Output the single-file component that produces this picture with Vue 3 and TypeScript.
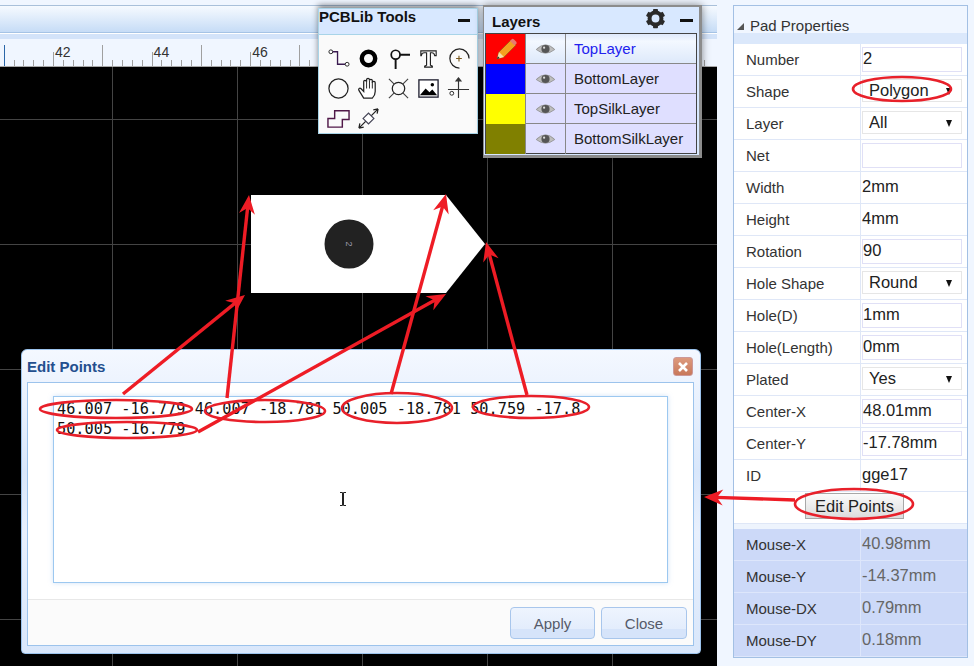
<script setup lang="ts">
interface Row { label: string; kind: 'input' | 'select' | 'text' | 'button'; value: string }
const rows: Row[] = [
  { label: 'Number', kind: 'input', value: '2' },
  { label: 'Shape', kind: 'select', value: 'Polygon' },
  { label: 'Layer', kind: 'select', value: 'All' },
  { label: 'Net', kind: 'input', value: '' },
  { label: 'Width', kind: 'text', value: '2mm' },
  { label: 'Height', kind: 'text', value: '4mm' },
  { label: 'Rotation', kind: 'input', value: '90' },
  { label: 'Hole Shape', kind: 'select', value: 'Round' },
  { label: 'Hole(D)', kind: 'input', value: '1mm' },
  { label: 'Hole(Length)', kind: 'input', value: '0mm' },
  { label: 'Plated', kind: 'select', value: 'Yes' },
  { label: 'Center-X', kind: 'input', value: '48.01mm' },
  { label: 'Center-Y', kind: 'input', value: '-17.78mm' },
  { label: 'ID', kind: 'text', value: 'gge17' },
]
const mouse = [
  { label: 'Mouse-X', value: '40.98mm' },
  { label: 'Mouse-Y', value: '-14.37mm' },
  { label: 'Mouse-DX', value: '0.79mm' },
  { label: 'Mouse-DY', value: '0.18mm' },
]
const layers = [
  { name: 'TopLayer', color: '#ff0000', active: true },
  { name: 'BottomLayer', color: '#0000ff', active: false },
  { name: 'TopSilkLayer', color: '#ffff00', active: false },
  { name: 'BottomSilkLayer', color: '#808000', active: false },
]
const points = '46.007 -16.779 46.007 -18.781 50.005 -18.781 50.759 -17.8\n50.005 -16.779'
const gearTeeth = [0, 60, 120]
const ticks = Array.from({ length: 72 }, (_, i) => {
  const x = 3.7 + i * 9.86
  const kind = i % 10 === 0 ? 45 : i % 5 === 0 ? 52 : 60
  return { x: Math.round(x) + 0.5, y: kind, blue: i === 0 }
})
const labels = ['42', '44', '46', '48', '50', '52', '54'].map((t, i) => ({ t, x: 55 + i * 98.6 }))

const ellipses = [
  [116, 409, 76, 9], [265, 411, 60, 11], [397, 408, 55, 15], [531, 407, 58, 11],
  [127, 430, 70, 8], [902, 89, 49, 12], [854, 504, 59, 15],
]
function arrow(x1: number, y1: number, x2: number, y2: number) {
  const l = Math.hypot(x2 - x1, y2 - y1)
  const ux = (x2 - x1) / l
  const uy = (y2 - y1) / l
  const px = -uy
  const py = ux
  const pt = (a: number, b: number) => `${(x2 - ux * a + px * b).toFixed(1)},${(y2 - uy * a + py * b).toFixed(1)}`
  return {
    x1, y1,
    x2: x2 - ux * 12,
    y2: y2 - uy * 12,
    head: [pt(0, 0), pt(19, 8), pt(13, 0), pt(19, -8)].join(' '),
  }
}
const arrows = [
  arrow(123, 394, 245, 295), arrow(227, 398, 249, 195), arrow(198, 432, 446, 294),
  arrow(391, 394, 446, 194), arrow(527, 395, 486, 242), arrow(795, 500, 704, 497),
]
</script>

<template>
  <div class="root">
    <div class="work">
      <div class="strip"></div>
      <div class="bar"></div>
      <div class="bar-low"></div>
      <svg class="ruler" width="717" height="28" viewBox="0 39 717 28">
        <line v-for="t in ticks" :key="t.x" :x1="t.x" :x2="t.x" :y1="t.y" y2="67" :stroke="t.blue ? '#2a66a8' : '#a0a0a0'" />
        <text v-for="l in labels" :key="l.t" :x="l.x" y="57" class="ruler-text">{{ l.t }}</text>
      </svg>
      <div class="canvas">
        <svg class="pad" width="717" height="599" viewBox="0 67 717 599">
          <polygon points="251,195 446,195 485,244 446,293 251,293" fill="#fff" />
          <circle cx="349" cy="244" r="24.5" fill="#222" />
          <text x="349" y="244" class="pad-text" transform="rotate(90 349 244)">2</text>
        </svg>
      </div>
    </div>

    <aside class="panel">
      <div class="panel-head"><span class="caret"></span>Pad Properties</div>
      <div v-for="r in rows" :key="r.label" class="row">
        <div class="label">{{ r.label }}</div>
        <div class="cell">
          <div v-if="r.kind === 'input'" class="input">{{ r.value }}</div>
          <div v-else-if="r.kind === 'select'" class="select"><span>{{ r.value }}</span><i class="down"></i></div>
          <div v-else class="plain">{{ r.value }}</div>
        </div>
      </div>
      <div class="btn-row"><button class="edit-btn">Edit Points</button></div>
      <div class="gap"></div>
      <div v-for="m in mouse" :key="m.label" class="row mouse">
        <div class="label">{{ m.label }}</div>
        <div class="cell"><div class="plain">{{ m.value }}</div></div>
      </div>
    </aside>

    <section class="tools">
      <header class="tools-head"><span>PCBLib Tools</span><i class="minus"></i></header>
      <div class="tools-grid">
        <svg viewBox="0 0 24 24"><circle cx="4" cy="5" r="2" fill="#fff" stroke="#222" /><path d="M6 5h5v13h8" fill="none" stroke="#3a1a50" stroke-width="1.4" /><circle cx="21" cy="18" r="2" fill="#fff" stroke="#222" /></svg>
        <svg viewBox="0 0 24 24"><circle cx="12" cy="12" r="7" fill="none" stroke="#000" stroke-width="4.600" /></svg>
        <svg viewBox="0 0 24 24"><circle cx="9" cy="8" r="4.6" fill="none" stroke="#111" stroke-width="1.8" /><path d="M13.5 8H24M9 12.5V23" stroke="#111" stroke-width="2" /></svg>
        <svg viewBox="0 0 24 24"><path d="M4 4h16v5h-1.500q-.5-3-3-3H14v13l2 1v1H8v-1l2-1V6H7.500q-2.500 0-3 3H4z" fill="#fff" stroke="#222" stroke-width="1.200" /></svg>
        <svg viewBox="0 0 24 24"><path d="M13 22A10 10 0 1 1 23 12M4.500 20" fill="none" stroke="#222" stroke-width="1.300" /><path d="M12.500 9v6M9.500 12h6" stroke="#7a5a20" stroke-width="1.200" /></svg>
        <svg viewBox="0 0 24 24"><circle cx="12" cy="12" r="10" fill="none" stroke="#222" stroke-width="1.300" /></svg>
        <svg viewBox="0 0 24 24"><path d="M7 22 2 14c-1-2 1-3 2-2l3 3V5c0-2 2.500-2 3 0v-2c0-2 3-2 3 0v1c0-2 3-2 3 0v2c0-2 3-1.500 3 0v9c0 3-1 5-3 7z" fill="#fff" stroke="#222" stroke-width="1.300" /><path d="M10 5v7M13 4v8M16 5v7" stroke="#222" /></svg>
        <svg viewBox="0 0 24 24"><circle cx="12" cy="12" r="6.500" fill="none" stroke="#222" stroke-width="1.300" /><path d="M2 2l5.500 5.500M22 2l-5.500 5.500M2 22l5.500-5.500M22 22l-5.500-5.500" stroke="#444" stroke-width="1.200" /></svg>
        <svg viewBox="0 0 24 24"><rect x="2" y="3" width="20" height="18" fill="#fff" stroke="#223" stroke-width="1.400" /><path d="M3 19l6-7 4 4 3-3 5 6z" fill="#000" /><circle cx="16" cy="8" r="1.800" fill="#000" /></svg>
        <svg viewBox="0 0 24 24"><path d="M12 3v19M1 13h22M12 1l-2.500 3h5z" stroke="#333" stroke-width="1.200" fill="#333" /><circle cx="5" cy="17" r="2" fill="#fff" stroke="#222" /></svg>
        <svg viewBox="0 0 24 24"><path d="M1 21V12h7V4h15v9h-7v8z" fill="none" stroke="#501848" stroke-width="1.500" /></svg>
        <svg viewBox="0 0 24 24"><path d="M2 22l20-20M2 22l1-5M2 22l5-1M22 2l-5 1M22 2l-1 5" stroke="#222" stroke-width="1.300" fill="none" /><rect x="8" y="8" width="8" height="8" fill="#fff" stroke="#445" stroke-width="1.200" transform="rotate(45 12 12)" /></svg>
      </div>
    </section>

    <section class="layers">
      <header class="layers-head">
        <span>Layers</span>
        <svg class="gear" viewBox="0 0 24 24">
          <circle cx="12" cy="12" r="6.800" fill="none" stroke="#2a2a2a" stroke-width="4.600" />
          <g v-for="a in gearTeeth" :key="'t' + a" :transform="`rotate(${a} 12 12)`">
            <rect x="9.200" y="1" width="5.600" height="4" rx=".8" fill="#2a2a2a" />
            <rect x="9.200" y="19" width="5.600" height="4" rx=".8" fill="#2a2a2a" />
          </g>
        </svg>
        <i class="minus wide"></i>
      </header>
      <div class="layer-table">
        <div v-for="l in layers" :key="l.name" class="layer-row" :class="{ active: l.active }">
          <div class="swatch" :style="{ background: l.color }">
            <svg v-if="l.active" viewBox="0 0 24 24" width="24" height="24">
              <path d="M3 22l2-7L17 3l5 5L10 20z" fill="#f4a020" stroke="#8a5a10" stroke-width=".6" />
              <path d="M16 4l2-2q1-.5 2 .5l2 2q1 1 .5 2l-2 2z" fill="#e87a70" />
              <path d="M3 22l2-7 5 5z" fill="#f7dca8" />
              <path d="M3 22l.8-2.800 2 2z" fill="#222" />
            </svg>
          </div>
          <div class="eye-cell">
            <svg viewBox="0 0 22 14" width="21" height="13">
              <path d="M1 7Q11-3 21 7 11 15 1 7z" fill="#bdbdbd" stroke="#8a8a8a" stroke-width=".8" />
              <circle cx="11" cy="6.500" r="4.400" fill="#555" />
              <circle cx="9.500" cy="5" r="1.200" fill="#ddd" />
            </svg>
          </div>
          <div class="layer-name">{{ l.name }}</div>
        </div>
      </div>
    </section>

    <section class="dialog">
      <header class="dialog-head">
        <span>Edit Points</span>
        <button class="x"><svg viewBox="0 0 12 12" width="12" height="12"><path d="M2 2l8 8M10 2l-8 8" stroke="#fff" stroke-width="2.600" /></svg></button>
      </header>
      <div class="dialog-body">
        <div class="dialog-main">
          <div class="area">{{ points }}</div>
        </div>
        <footer class="dialog-foot">
          <button class="dlg-btn">Apply</button>
          <button class="dlg-btn">Close</button>
        </footer>
      </div>
    </section>

    <svg class="marks" width="974" height="666" viewBox="0 0 974 666">
      <path d="M340 492.500h2.500v13H340m6 0h-2.500v-13h2.500" fill="none" stroke="#222" />
      <ellipse v-for="(e, i) in ellipses" :key="i" :cx="e[0]" :cy="e[1]" :rx="e[2]" :ry="e[3]" fill="none" stroke="#e8202a" stroke-width="2.600" />
      <g v-for="(a, i) in arrows" :key="'a' + i">
        <line :x1="a.x1" :y1="a.y1" :x2="a.x2" :y2="a.y2" stroke="#ee1c25" stroke-width="3.400" />
        <polygon :points="a.head" fill="#ee1c25" />
      </g>
    </svg>
  </div>
</template>

<style scoped>
.root {
  position: relative;
  width: 974px;
  height: 666px;
  overflow: hidden;
  display: flex;
  background: #f0f6ff;
  font-family: "Liberation Sans", Arial, sans-serif;
  color: #222;
}
.work { width: 717px; flex: none; display: flex; flex-direction: column; }
.strip { height: 5px; border-bottom: 1px solid #a9c0da; flex: none; box-sizing: content-box; }
.bar { height: 26px; flex: none; background: linear-gradient(#f6faff, #c6dcf6); border-bottom: 1px solid #a5c3e5; box-sizing: content-box; }
.bar-low { height: 5px; flex: none; border-top: 1px solid #fff; background: #d3e3f9; border-bottom: 1px solid #a9c3e2; box-sizing: content-box; margin-bottom: -1px; }
.ruler { display: block; flex: none; background: #f0f6ff; }
.ruler-text { font-size: 14px; fill: #333; }
.canvas {
  flex: 1;
  position: relative;
  background-color: #000;
  background-image: linear-gradient(to bottom, #444 1px, transparent 1px), linear-gradient(to right, #444 1px, transparent 1px);
  background-size: 125px 125px;
  background-position: 0 52px, 112px 0;
  border-top: 1px solid #a8a8a8;
  margin-top: -1px;
}
.pad { position: absolute; left: 0; top: 0; display: block; }
.pad-text { font-size: 9px; fill: #9a9aaa; text-anchor: middle; dominant-baseline: central; }

.panel {
  width: 235px;
  height: 653px;
  margin: 5px 0 0 16px;
  flex: none;
  border: 1px solid #a3c0e4;
  box-sizing: border-box;
  display: flex;
  flex-direction: column;
  font-size: 15px;
}
.panel-head {
  height: 38px;
  flex: none;
  background: linear-gradient(#f0f6ff 0 71%, #dbe8fb 71%);
  display: flex;
  align-items: center;
  padding: 5px 0 5px 3px;
  box-sizing: border-box;
  color: #333;
  gap: 6px;
}
.caret { width: 0; height: 0; border-left: 7px solid transparent; border-bottom: 7px solid #555; margin-top: 2px; }
.row {
  height: 32px;
  flex: none;
  box-sizing: border-box;
  display: grid;
  grid-template-columns: 127px 1fr;
  background: #fff;
  border-bottom: 1px solid #dfe7f7;
}
.label { padding-left: 12px; line-height: 31px; color: #333; border-right: 1px solid #dfe7f7; }
.cell { padding: 3px 5px 0 1px; font-size: 16.500px; }
.input, .select { height: 25px; box-sizing: border-box; line-height: 21px; white-space: nowrap; }
.input { border: 1px solid #e0e0f6; }
.select { border: 1px solid #e6e6e6; height: 23px; padding-left: 6px; display: flex; justify-content: space-between; align-items: center; padding-right: 9px; }
.down { width: 0; height: 0; border-left: 3.500px solid transparent; border-right: 3.500px solid transparent; border-top: 7px solid #111; margin-top: 2px; }
.plain { line-height: 22px; }
.btn-row { height: 30px; flex: none; background: #fff; border-bottom: 1px solid #dfe7f7; display: flex; justify-content: center; padding-top: 1px; box-sizing: content-box; }
.edit-btn {
  width: 99px;
  height: 26px;
  border: 1px solid #a8a8a8;
  background: linear-gradient(#fbfbfb, #dcdcdc);
  font: 16.500px "Liberation Sans", Arial, sans-serif;
  color: #222;
  padding: 0;
  margin-left: 8px;
}
.gap { height: 5px; flex: none; background: #eef4fd; }
.mouse { background: #ccd9f8; border-bottom-color: #dde6fb; }
.mouse .label { border-right-color: #dde6fb; }
.mouse .plain { color: #666; }

.tools {
  position: absolute;
  left: 318px;
  top: 8px;
  width: 160px;
  height: 126px;
  box-sizing: border-box;
  border: 1px solid #a8d4e8;
  background: #fafafa;
  box-shadow: 0 -3px 6px rgba(0, 0, 0, .45);
}
.tools-head {
  height: 25px;
  background: #d8e8ff;
  border-bottom: 1px solid #a8d4e8;
  display: flex;
  justify-content: space-between;
  font-weight: bold;
  font-size: 15px;
  color: #111;
  line-height: 16px;
  padding: 0 7px 0 0;
}
.minus { width: 12px; height: 3px; background: #111; margin-top: 10px; display: block; flex: none; }
.minus.wide { width: 13px; margin-top: 0; }
.tools-grid { display: grid; grid-template-columns: repeat(5, 30px); grid-auto-rows: 30px; padding: 8px 0 0 4px; justify-items: center; align-items: center; }
.tools-grid svg { width: 23px; height: 23px; display: block; }

.layers {
  position: absolute;
  left: 483px;
  top: 5px;
  width: 219px;
  height: 153px;
  box-sizing: border-box;
  border-style: solid;
  border-color: #8c8c8c;
  border-width: 2px 3px 3px 1px;
  background: #d8e8ff;
  box-shadow: 0 0 8px rgba(0, 0, 0, .45);
  padding: 0 1px;
}
.layers-head { height: 26px; display: flex; align-items: center; font-size: 15px; font-weight: bold; color: #111; padding: 0 5px 0 7px; }
.layers-head span { flex: 1; padding-top: 2px; }
.gear { width: 21px; height: 21px; margin: -3px 14px 0 0; display: block; }
.layer-table { border: 1px solid #444; box-sizing: border-box; width: 212px; height: 121px; background: #dfdfff; }
.layer-row { display: grid; grid-template-columns: 40px 40px 1fr; height: 30px; box-sizing: border-box; border-bottom: 1px solid #888; font-size: 15px; }
.layer-row:last-child { border-bottom: 0; }
.swatch { border-right: 1px solid #888; display: flex; align-items: center; justify-content: center; }
.eye-cell { border-right: 1px solid #888; display: flex; align-items: center; justify-content: center; }
.layer-name { padding-left: 8px; line-height: 30px; white-space: nowrap; color: #222; }
.layer-row.active { background: linear-gradient(#dfe9fb, #f3f8ff 25%, #dfeafb 95%); }
.layer-row.active .layer-name { color: #2222ee; }

.dialog {
  position: absolute;
  left: 21px;
  top: 349px;
  width: 680px;
  height: 305px;
  box-sizing: border-box;
  border: 1px solid #9cc3ec;
  border-radius: 6px 6px 4px 4px;
  background: linear-gradient(#f4f8ff, #d9e7fb 40%, #e8f0fd 60%, #d9e7fb);
  padding: 0 6px 7px 5px;
  display: flex;
  flex-direction: column;
}
.dialog-head { height: 32px; flex: none; display: flex; justify-content: space-between; align-items: center; font-weight: bold; font-size: 15px; color: #234f8e; padding: 6px 1px 5px 0; box-sizing: border-box; }
.x { width: 20px; height: 19px; padding: 0; border: 1px solid #c99; border-radius: 3px; background: linear-gradient(#dd9a7e, #c8785a); display: flex; align-items: center; justify-content: center; }
.dialog-body { flex: 1; background: #fff; border: 1px solid #9cc3ec; display: flex; flex-direction: column; }
.dialog-main { flex: 1; padding: 13px 25px 0 25px; min-height: 0; }
.area {
  height: 187px;
  box-sizing: border-box;
  border: 1px solid #9cc8f0;
  box-shadow: 0 0 5px rgba(120, 170, 230, .35);
  padding: 2px 3px;
  font: 15.250px/20px "DejaVu Sans Mono", monospace;
  color: #111;
  white-space: pre-wrap;
  overflow: hidden;
}
.dialog-foot { height: 46px; flex: none; border-top: 1px solid #e8e8e8; background: #fbfbfb; display: flex; justify-content: flex-end; align-items: flex-start; gap: 6px; padding: 7px 6px 0 0; box-sizing: border-box; }
.dlg-btn { width: 85px; height: 32px; border: 1px solid #a8c6ec; border-radius: 4px; background: linear-gradient(#eef4fe, #e3edfc 70%, #d6e4fa 70%); font: 15px "Liberation Sans", Arial, sans-serif; color: #555a6a; padding: 0; }
.dlg-btn:last-child { width: 86px; }

.marks { position: absolute; left: 0; top: 0; pointer-events: none; display: block; }
</style>
